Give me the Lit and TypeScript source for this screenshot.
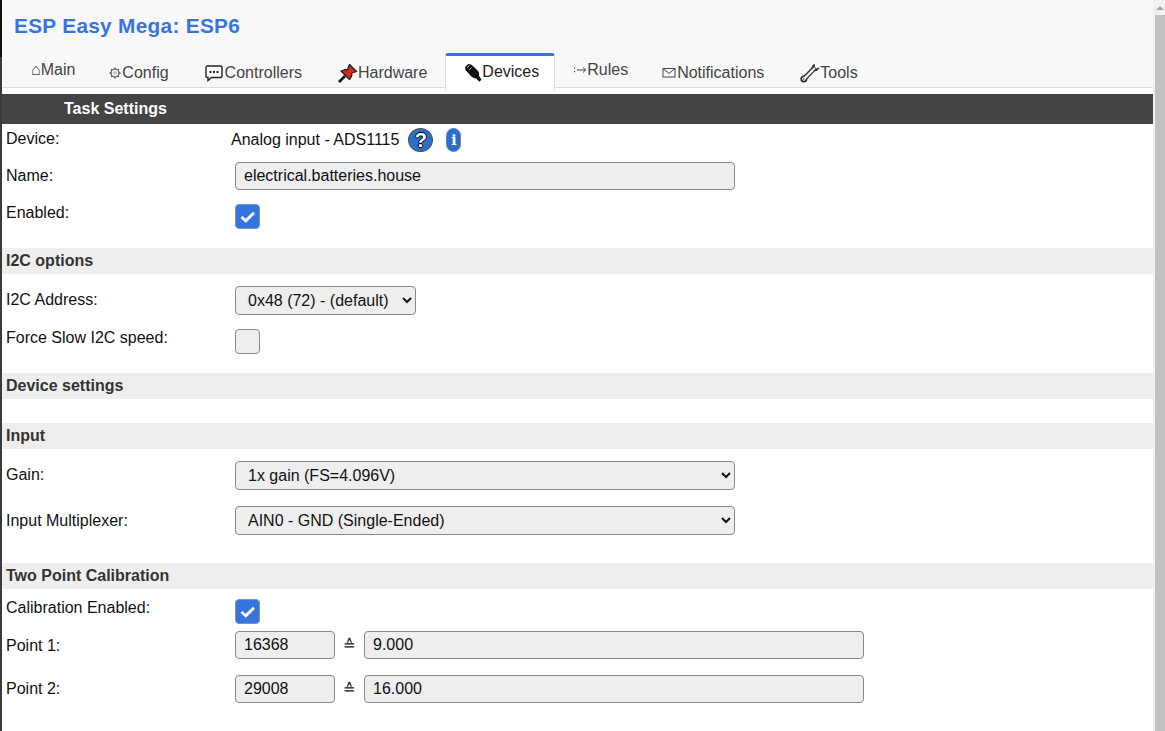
import { LitElement, html, css, svg } from "lit";
import { customElement } from "lit/decorators.js";

const gear = html`<svg class="ico" width="14" height="14" viewBox="0 0 14 14"><circle cx="7" cy="7" r="4" fill="none" stroke="#444" stroke-width="1.100"/><circle cx="7" cy="7" r="1.300" fill="none" stroke="#777" stroke-width=".6"/><path d="M7 1.300V3M7 11V12.700M1.300 7H3M11 7H12.700M3 3L4.200 4.200M9.800 9.800L11 11M3 11L4.200 9.800M9.800 4.200L11 3" stroke="#444" stroke-width="1"/></svg>`;
const bubble = html`<svg class="ico" width="20" height="20" viewBox="0 0 20 20"><path d="M2.500 3 H15.500 Q17 3 17 4.500 V13 Q17 14.500 15.500 14.500 H6.500 L3 17.500 V14.500 H2.500 Q1 14.500 1 13 V4.500 Q1 3 2.500 3 Z" fill="#fff" stroke="#222" stroke-width="1.400"/><rect x="4.500" y="8" width="2" height="2" fill="#222"/><rect x="8" y="8" width="2" height="2" fill="#222"/><rect x="11.500" y="8" width="2" height="2" fill="#222"/></svg>`;
const pin = html`<svg class="ico" width="20" height="20" viewBox="0 0 20 20"><path d="M1 19 L7 13" stroke="#111" stroke-width="2.600"/><path d="M3 8 L6 7 L9.500 6.500 L11.500 1.500 L18.500 8.500 L14 10 L13.500 13.500 L11.500 16.500 Z" fill="#d9281e" stroke="#222" stroke-width="1.300" stroke-linejoin="round"/></svg>`;
const plug = html`<svg class="ico" width="18" height="20" viewBox="0 0 18 20"><path d="M1 5 L4 2 L7 2.500 L10 5 L14 9 Q16 11 15 14 L17.500 17.500 L15.500 19.800 L12 16.500 Q8 16 5.500 12.500 L1.500 8 Z" fill="#111"/><path d="M3 6 L5.500 3.500 M5 8 L7.500 5.500" stroke="#fff" stroke-width=".7"/></svg>`;
const arrow = html`<svg class="ico" width="14" height="12" viewBox="0 0 14 12"><rect x="1" y="3.500" width="1.200" height="1.200" fill="#444"/><rect x="1" y="7" width="1.200" height="1.200" fill="#444"/><path d="M4 6 H12.500 M10 3.500 L12.700 6 L10 8.500" fill="none" stroke="#444" stroke-width="1"/></svg>`;
const mail = html`<svg class="ico" width="15" height="12" viewBox="0 0 15 12"><rect x="1" y="1.500" width="12" height="8.500" fill="none" stroke="#444" stroke-width="1"/><path d="M1 1.500 L7 6.500 L13 1.500" fill="none" stroke="#444" stroke-width="1"/></svg>`;
const wrench = html`<svg class="ico" width="20" height="20" viewBox="0 0 20 20"><path d="M4 16 L14.500 5" stroke="#333" stroke-width="5"/><circle cx="3.800" cy="16" r="3.500" fill="#333"/><path d="M15 1 Q11.500 1.500 11.800 5 L15 8.300 Q18.800 8 19.200 4.300 L16.500 5.500 L14.800 4 Z" fill="#333"/><path d="M4 16 L14.800 5" stroke="#f4f4f4" stroke-width="2.400"/><circle cx="3.800" cy="16" r="1.700" fill="#fff"/><circle cx="3.800" cy="16" r=".8" fill="#333"/></svg>`;

@customElement("app-root")
export class AppRoot extends LitElement {
  static styles = css`
    :host { display: block; height: 731px; overflow: hidden; font-family: "Liberation Sans", Arial, sans-serif; color: #111; font-size: 16px; }
    .shell { display: grid; grid-template-columns: 2px 1fr 12px; height: 731px; }
    .edge { background: linear-gradient(#111 57px, #3a3a3a 57px); }
    .bar { background: #f1f1f1; display: flex; flex-direction: column; }
    .up { height: 15px; display: flex; justify-content: center; align-items: center; padding-left: 1px; }
    .tri { width: 0; height: 0; border-left: 4px solid transparent; border-right: 4px solid transparent; border-bottom: 4px solid #a3a3a3; }
    .thumb { flex: 1; background: #c1c1c1; margin-left: 2px; }
    main { min-width: 0; }
    header { background: #f8f8f8; height: 88px; position: relative; border-bottom: 1px solid #ddd; box-sizing: border-box; }
    h1 { margin: 0; padding: 14px 0 0 12px; font-size: 20.8px; line-height: 24px; font-weight: 700; color: #3674e0; letter-spacing: 0.3px; }
    nav { position: absolute; left: 0; right: 0; top: 53px; display: flex; padding-left: 11px; height: 38px; }
    .tab { display: flex; align-items: center; padding: 0 18px; box-sizing: border-box; height: 38px; color: #444; white-space: nowrap; }
    .tab.high { padding-bottom: 5px; }
    .tab.low { padding-top: 1px; }
    .tab.gearTab { padding-left: 15px; }
    .tab.on { background: #fff; border-top: 3px solid #3674e0; border-left: 1px solid #ddd; border-right: 1px solid #ddd; border-radius: 3px 3px 0 0; color: #222; padding: 0 15px 3px 18px; }
    .tab.mailTab { padding-left: 16px; }
    .ico { display: block; flex: none; }
    .home { font-size: 16px; }
    .title { margin-top: 6px; height: 30px; background: #444; color: #fff; font-weight: 700; display: flex; align-items: center; padding-left: 62px; }
    .row { display: flex; align-items: flex-start; padding-left: 4px; box-sizing: border-box; }
    .r-device { margin-top: 4px; height: 34px; }
    .r-name { height: 42px; }
    .r-enabled { height: 44px; }
    .r-addr { height: 55px; padding-top: 12px; }
    .r-force { height: 44px; }
    .r-gain { height: 57px; padding-top: 12px; }
    .r-mux { height: 57px; }
    .r-calib { height: 42px; padding-top: 10px; }
    .r-point { height: 44px; }
    .lab { width: 229px; flex: none; line-height: 18px; }
    .lab.t2 { padding-top: 2px; }
    .lab.t4 { padding-top: 5px; }
    .lab.t5 { padding-top: 5px; }
    .lab.t6 { padding-top: 6px; }
    .sec { height: 26px; line-height: 26px; background: #eee; font-weight: 700; color: #333; padding-left: 4px; }
    .spacer { height: 24px; }
    .ctl { display: block; box-sizing: border-box; background: #eee; border: 1px solid #888; border-radius: 4px; font: 16px "Liberation Sans", Arial, sans-serif; color: #111; height: 28px; }
    input.ctl { padding: 0 8px; outline: none; }
    select.ctl { padding: 0 0 0 8px; height: 29px; }
    .wide { width: 500px; }
    .addr { width: 181px; }
    .check { display: flex; width: 25px; height: 25px; box-sizing: border-box; border-radius: 4px; border: 1px solid #888; background: #eee; align-items: center; justify-content: center; }
    .check.on { background: #3674e0; border-color: #7a94c0; }
    .q { width: 25px; height: 24px; border-radius: 50%; background: #2e6ec8; border: 1px solid #555; box-sizing: border-box; color: #fff; font-weight: 700; font-size: 20px; text-shadow: 1px 0 0 #000, -1px 0 0 #000, 0 1px 0 #000, 0 -1px 0 #000; display: flex; align-items: center; justify-content: center; margin-left: 9px; }
    .i { width: 15px; height: 24px; border-radius: 8px; background: #2e6ec8; border: 1px solid #5a86c8; box-sizing: border-box; color: #fff; font-weight: 700; font-size: 14px; display: flex; align-items: center; justify-content: center; margin-left: 13px; font-family: "DejaVu Serif", serif; }
    .dev { display: flex; align-items: center; margin-left: -4px; }
    .eq { width: 29px; text-align: center; font-size: 15px; line-height: 28px; flex: none; }
    .fields { display: flex; }
    .short { width: 100px; }
    .long { width: 500px; }
  `;

  private check(on: boolean) {
    return html`<span class="check ${on ? "on" : ""}">${on
      ? svg`<svg width="16" height="12" viewBox="0 0 16 12"><path d="M1.500 6 L5.800 9.800 L14 1.800" fill="none" stroke="#fff" stroke-width="3"/></svg>`
      : ""}</span>`;
  }

  render() {
    return html`
      <div class="shell">
        <div class="edge"></div>
        <main>
          <header>
            <h1>ESP Easy Mega: ESP6</h1>
            <nav>
              <div class="tab high"><span class="home">⌂</span>Main</div>
              <div class="tab low gearTab">${gear}Config</div>
              <div class="tab low">${bubble}Controllers</div>
              <div class="tab low">${pin}Hardware</div>
              <div class="tab on">${plug}Devices</div>
              <div class="tab high">${arrow}Rules</div>
              <div class="tab low mailTab">${mail}Notifications</div>
              <div class="tab low">${wrench}Tools</div>
            </nav>
          </header>
          <div class="title">Task Settings</div>
          <div class="row r-device">
            <div class="lab t2">Device:</div>
            <div class="dev">Analog input - ADS1115<span class="q">?</span><span class="i">i</span></div>
          </div>
          <div class="row r-name">
            <div class="lab t5">Name:</div>
            <input class="ctl wide" .value=${"electrical.batteries.house"} />
          </div>
          <div class="row r-enabled">
            <div class="lab">Enabled:</div>
            ${this.check(true)}
          </div>
          <div class="sec">I2C options</div>
          <div class="row r-addr">
            <div class="lab t4">I2C Address:</div>
            <select class="ctl addr"><option>0x48 (72) - (default)</option></select>
          </div>
          <div class="row r-force">
            <div class="lab">Force Slow I2C speed:</div>
            ${this.check(false)}
          </div>
          <div class="sec">Device settings</div>
          <div class="spacer"></div>
          <div class="sec">Input</div>
          <div class="row r-gain">
            <div class="lab t5">Gain:</div>
            <select class="ctl wide"><option>1x gain (FS=4.096V)</option></select>
          </div>
          <div class="row r-mux">
            <div class="lab t6">Input Multiplexer:</div>
            <select class="ctl wide"><option>AIN0 - GND (Single-Ended)</option></select>
          </div>
          <div class="sec">Two Point Calibration</div>
          <div class="row r-calib">
            <div class="lab">Calibration Enabled:</div>
            ${this.check(true)}
          </div>
          <div class="row r-point">
            <div class="lab t6">Point 1:</div>
            <div class="fields"><input class="ctl short" .value=${"16368"} /><span class="eq">≙</span><input class="ctl long" .value=${"9.000"} /></div>
          </div>
          <div class="row r-point">
            <div class="lab t5">Point 2:</div>
            <div class="fields"><input class="ctl short" .value=${"29008"} /><span class="eq">≙</span><input class="ctl long" .value=${"16.000"} /></div>
          </div>
        </main>
        <div class="bar"><div class="up"><span class="tri"></span></div><div class="thumb"></div></div>
      </div>
    `;
  }
}
